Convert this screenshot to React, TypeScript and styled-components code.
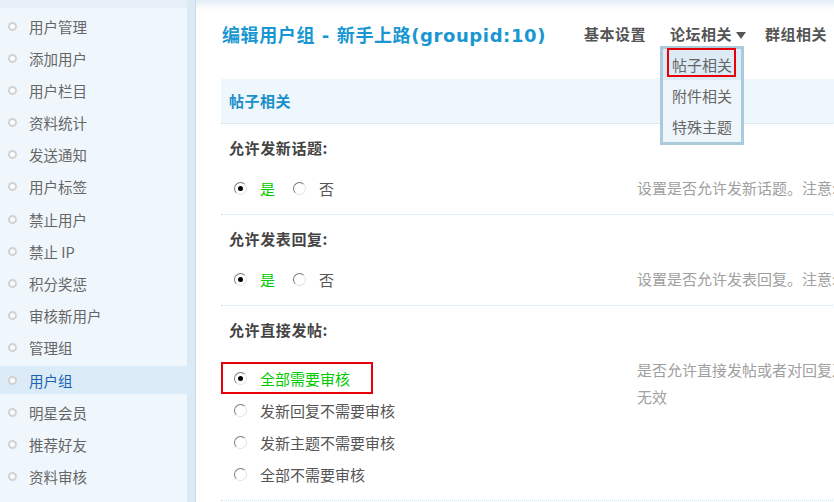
import React from 'react'
import styled, { createGlobalStyle } from 'styled-components'

const GlobalStyle = createGlobalStyle`
  html, body {
    margin: 0;
    padding: 0;
    overflow: hidden;
    background: #fff;
  }
  body {
    font-family: "Noto Sans CJK SC", "DejaVu Sans", sans-serif;
    font-size: 15px;
    color: #555;
  }
  * {
    box-sizing: border-box;
  }
`

const Page = styled.div`
  display: flex;
  width: 834px;
  height: 502px;
  overflow: hidden;
`

const Sidebar = styled.ul`
  width: 187px;
  flex-shrink: 0;
  margin: 0;
  padding: 4px 0 0;
  list-style: none;
  background: #f0f7fc;
  border-top: 8px solid #e7f0f8;
`

const NavItem = styled.li<{ $active?: boolean }>`
  display: flex;
  align-items: center;
  height: 28px;
  margin-bottom: 4.2px;
  padding-left: 8px;
  font-size: 14.5px;
  color: ${p => (p.$active ? '#1b63b2' : '#666')};
  background: ${p => (p.$active ? '#dcebf8' : 'transparent')};
`

const Bullet = styled.span`
  width: 9px;
  height: 9px;
  margin-right: 12px;
  border-radius: 50%;
  border: 2px solid #d2d2d2;
  background: #fbfbfb;
`

const Divider = styled.div`
  width: 9px;
  flex-shrink: 0;
  background: #dceaf6;
  border-right: 1px solid #c9d9e8;
`

const Main = styled.div`
  flex: 1;
  position: relative;
  overflow: hidden;
  background: linear-gradient(#e4eef7, #fff 10px);
  padding-top: 10px;
`

const Content = styled.div`
  width: 900px;
  margin-left: 25px;
`

const Header = styled.div`
  display: flex;
  align-items: flex-start;
  height: 69px;
  padding-top: 16px;
`

const Title = styled.h1`
  width: 363px;
  flex-shrink: 0;
  margin: 0;
  padding-left: 1px;
  font-family: "DejaVu Sans", "Noto Sans CJK SC", sans-serif;
  font-size: 18px;
  line-height: 20px;
  font-weight: bold;
  letter-spacing: 0.6px;
  color: #1997d2;
  white-space: nowrap;
`

const Tabs = styled.div`
  display: flex;
  gap: 24px;
  margin-top: -2px;
`

const Tab = styled.div`
  position: relative;
  display: flex;
  align-items: center;
  font-size: 15px;
  line-height: 20px;
  font-weight: bold;
  letter-spacing: 0.5px;
  color: #555;
  white-space: nowrap;
`

const Caret = styled.span`
  width: 0;
  height: 0;
  margin: 3px -5px 0 4px;
  border-left: 5px solid transparent;
  border-right: 5px solid transparent;
  border-top: 7px solid #555;
`

const Dropdown = styled.div`
  position: absolute;
  top: calc(100% + 2px);
  left: -10px;
  width: 84px;
  border: 3px solid #abcbdc;
  background: #eef6fb;
  z-index: 2;
`

const DropItem = styled.div<{ $marked?: boolean }>`
  position: relative;
  height: 31px;
  line-height: 31px;
  text-align: center;
  font-size: 15px;
  font-weight: normal;
  letter-spacing: 0;
  color: #666;
  background: ${p => (p.$marked ? '#dcebf6' : 'transparent')};

  ${p =>
    p.$marked &&
    `
    &::after {
      content: '';
      position: absolute;
      left: 4px;
      right: 5px;
      top: -1px;
      bottom: 3px;
      border: 2px solid #e8000b;
    }
  `}
`

const Band = styled.div`
  height: 45px;
  padding-left: 8px;
  line-height: 44px;
  font-size: 15px;
  font-weight: bold;
  letter-spacing: 0.5px;
  color: #1a8fca;
  background: #eef7fc;
  border-bottom: 1px dotted #c6e0f0;
`

const Block = styled.div`
  padding: 14px 0 10px;
  border-bottom: 1px dotted #c6e0f0;
`

const Label = styled.div`
  padding-left: 8px;
  line-height: 20px;
  font-size: 15px;
  font-weight: bold;
  letter-spacing: 0.6px;
  color: #444;
`

const OptionsRow = styled.div<{ $gap: number }>`
  display: grid;
  grid-template-columns: 416px 1fr;
  margin-top: ${p => p.$gap}px;
`

const Options = styled.div<{ $inline?: boolean }>`
  display: flex;
  flex-direction: ${p => (p.$inline ? 'row' : 'column')};
  gap: ${p => (p.$inline ? '3px' : '0')};
  align-items: flex-start;
`

const Option = styled.label<{ $marked?: boolean }>`
  display: flex;
  align-items: center;
  height: 32px;
  width: ${p => (p.$marked ? '152px' : 'auto')};
  padding-left: 11px;
  border: 2px solid ${p => (p.$marked ? '#e8000b' : 'transparent')};
`

const Radio = styled.span<{ $checked?: boolean }>`
  position: relative;
  width: 13px;
  height: 13px;
  flex-shrink: 0;
  border-radius: 50%;
  border: 1px solid;
  border-color: #7a7a7a #e2e2e2 #e2e2e2 #7a7a7a;
  background: #fff;

  &::after {
    content: '';
    display: ${p => (p.$checked ? 'block' : 'none')};
    position: absolute;
    left: 3px;
    top: 3px;
    width: 5px;
    height: 5px;
    border-radius: 50%;
    background: #000;
  }
`

const OptionText = styled.span<{ $on?: boolean }>`
  margin-left: 13px;
  font-size: 15px;
  color: ${p => (p.$on ? '#00cc00' : '#555')};
  white-space: nowrap;
`

const Desc = styled.div<{ $shift: number }>`
  margin-top: ${p => p.$shift}px;
  line-height: 27px;
  font-size: 15px;
  color: #a0a0a0;
  white-space: nowrap;
`

const navItems = [
  '用户管理',
  '添加用户',
  '用户栏目',
  '资料统计',
  '发送通知',
  '用户标签',
  '禁止用户',
  '禁止 IP',
  '积分奖惩',
  '审核新用户',
  '管理组',
  '用户组',
  '明星会员',
  '推荐好友',
  '资料审核',
]

type Choice = { text: string; checked?: boolean; marked?: boolean }

const Field = ({
  label,
  choices,
  inline,
  gap,
  desc,
  shift,
}: {
  label: string
  choices: Choice[]
  inline?: boolean
  gap: number
  desc: React.ReactNode
  shift: number
}) => (
  <Block>
    <Label>{label}</Label>
    <OptionsRow $gap={gap}>
      <Options $inline={inline}>
        {choices.map(c => (
          <Option key={c.text} $marked={c.marked}>
            <Radio $checked={c.checked} />
            <OptionText $on={c.checked}>{c.text}</OptionText>
          </Option>
        ))}
      </Options>
      <Desc $shift={shift}>{desc}</Desc>
    </OptionsRow>
  </Block>
)

const App = () => {
  return (
    <Page>
      <GlobalStyle />
      <Sidebar>
        {navItems.map(item => (
          <NavItem key={item} $active={item === '用户组'}>
            <Bullet />
            {item}
          </NavItem>
        ))}
      </Sidebar>
      <Divider />
      <Main>
        <Content>
          <Header>
            <Title>编辑用户组 - 新手上路(groupid:10)</Title>
            <Tabs>
              <Tab>基本设置</Tab>
              <Tab>
                论坛相关
                <Caret />
                <Dropdown>
                  <DropItem $marked>帖子相关</DropItem>
                  <DropItem>附件相关</DropItem>
                  <DropItem>特殊主题</DropItem>
                </Dropdown>
              </Tab>
              <Tab>群组相关</Tab>
            </Tabs>
          </Header>
          <Band>帖子相关</Band>
          <Field
            label="允许发新话题:"
            inline
            gap={14}
            shift={2}
            choices={[{ text: '是', checked: true }, { text: '否' }]}
            desc="设置是否允许发新话题。注意:"
          />
          <Field
            label="允许发表回复:"
            inline
            gap={14}
            shift={2}
            choices={[{ text: '是', checked: true }, { text: '否' }]}
            desc="设置是否允许发表回复。注意:"
          />
          <Field
            label="允许直接发帖:"
            gap={22}
            shift={-6}
            choices={[
              { text: '全部需要审核', checked: true, marked: true },
              { text: '发新回复不需要审核' },
              { text: '发新主题不需要审核' },
              { text: '全部不需要审核' },
            ]}
            desc={
              <>
                是否允许直接发帖或者对回复及主题进行审核<br />
                无效
              </>
            }
          />
        </Content>
      </Main>
    </Page>
  )
}

export default App
